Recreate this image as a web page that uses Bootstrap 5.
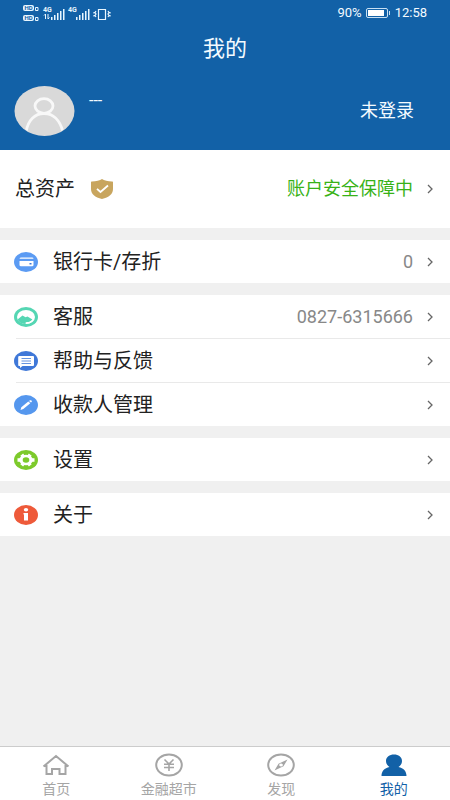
<!DOCTYPE html>
<html lang="zh-CN">
<head>
<meta charset="utf-8">
<meta name="viewport" content="width=device-width, initial-scale=1">
<title>我的</title>
<link href="https://cdn.jsdelivr.net/npm/bootstrap@5.3.0/dist/css/bootstrap.min.css" rel="stylesheet">
<style>
body{font-family:Roboto,"Noto Sans CJK SC",sans-serif;background:#f0f0f0;color:#222}
.top-area{background:#1261a7;color:#f4fbff}
.status-bar{height:26px;padding:0 23px;font-size:13px;line-height:26px}
.page-title{font-size:22px;line-height:30px;height:46px;padding-top:8px;font-weight:400}
.profile-row{height:78px;padding:0 36px 0 14px}
.user-name{font-size:16px;line-height:20px;margin-bottom:20px;margin-left:14px}
.t18{font-size:18px;line-height:24px}
.menu-stack{gap:12px}
.menu-item{height:43px;padding:0 16px 0 14px;color:#222;background:#fff}
.menu-item:hover{background:#fafafa}
.menu-text{font-size:20px;line-height:28px;margin-left:15px}
.asset-item{height:78px}
.asset-item .menu-text{margin-left:1px;margin-right:15px}
.safe{color:#38b217}
.value-text{color:#888}
.arrow{margin-left:13px}
.rule{height:1px;margin-left:16px;background:#e9e9e9}
.tab-bar{height:54px;border-top:1px solid #ccc;background:#fff}
.tab-link{color:#a5a5a5;font-size:14px;line-height:18px;padding-top:6px;gap:3px}
.tab-link.active{color:#1261a7}
</style>
<script src="https://cdn.jsdelivr.net/npm/bootstrap@5.3.0/dist/js/bootstrap.bundle.min.js" defer></script>
</head>
<body>
<svg class="d-none"><symbol id="chev" viewBox="0 0 8 12"><path d="M2 2l4 4-4 4" fill="none" stroke="#666" stroke-width="1.3"/></symbol></svg>
<div class="d-flex flex-column min-vh-100">
<header class="top-area">
  <div class="status-bar d-flex align-items-center justify-content-between">
    <svg width="90" height="20" viewBox="0 0 90 20" fill="#e8f6ff" font-family="Roboto,sans-serif" font-weight="700">
      <rect x="0" y="2" width="11" height="6" rx="2"/><rect x="0" y="12" width="11" height="6" rx="2"/>
      <g fill="#1261a7" font-size="6"><text x="1.5" y="7.2">HD</text><text x="1.5" y="17.2">HD</text></g>
      <path d="M12.500 4.500h2.500v3h-2.500zM12.500 14.500h2.500v3h-2.500z" fill="none" stroke="#e8f6ff"/>
      <text x="20" y="9" font-size="7">4G</text><text x="45" y="9" font-size="7">4G</text>
      <path d="M22.500 16v-5l-1.500 1.500M25 11v5l1.500-1.500" stroke="#e8f6ff" fill="none"/>
      <path d="M28 14h1.500v3H28zM31 12h1.500v5H31zM34 10h1.500v7H34zM37 8h1.500v9H37zM40 6h1.500v11H40zM53 14h1.500v3H53zM56 12h1.500v5H56zM59 10h1.500v7H59zM62 8h1.500v9H62zM65 6h1.500v11H65z"/>
      <path d="M75.500 6.500h7v10h-7zM73 8l-1 1.500 1 1.500-1 1.500 1 1.500M71 9v1.500M71 12v1.500M85 8l1 1.500-1 1.500 1 1.500-1 1.500M87 9v1.500M87 12v1.500" fill="none" stroke="#e8f6ff" stroke-width="1.200"/>
    </svg>
    <div class="d-flex align-items-center">
      <span>90%</span>
      <svg class="ms-1 me-1" width="25" height="10" viewBox="0 0 25 10"><rect x=".5" y=".5" width="21" height="9" rx="1.500" fill="none" stroke="#c8e0f3"/><rect x="2" y="2" width="16" height="6" fill="#fff"/><path d="M23.500 3v4" stroke="#c8e0f3"/></svg>
      <span>12:58</span>
    </div>
  </div>
  <h1 class="page-title text-center m-0">我的</h1>
  <div class="profile-row d-flex align-items-center">
    <svg width="61" height="50" viewBox="0 0 61 50"><defs><clipPath id="face"><ellipse cx="30.500" cy="25" rx="29.500" ry="24.500"/></clipPath></defs><ellipse cx="30.500" cy="25" rx="30" ry="25" fill="#d9d9d9"/><g clip-path="url(#face)" fill="none" stroke="#f8f8f8" stroke-width="2.800"><ellipse cx="30" cy="20" rx="9" ry="7.300"/><path d="M12 46c2-12 9-18.500 18-18.500S46 34 49 46"/></g></svg>
    <span class="user-name">---</span>
    <span class="t18 ms-auto">未登录</span>
  </div>
</header>
<main class="menu-stack d-flex flex-column">
  <a href="#" class="menu-item asset-item d-flex align-items-center text-decoration-none">
    <span class="menu-text">总资产</span>
    <svg width="24" height="22" viewBox="0 0 24 22"><path d="M12 1c2 1.500 6 2.300 10 2.500.8 0 1 .4 1 1V11c0 5-4 8.500-11 10C5 19.500 1 16 1 11V4.500c0-.6.2-1 1-1C6 3.300 10 2.500 12 1z" fill="#c8a55e"/><path d="M7 10.800l3.500 3.200L18 7.500" fill="none" stroke="#fff" stroke-width="1.800"/></svg>
    <span class="t18 safe ms-auto">账户安全保障中</span><svg class="arrow" width="8" height="12"><use href="#chev"/></svg>
  </a>
  <a href="#" class="menu-item d-flex align-items-center text-decoration-none">
    <svg width="24" height="20" viewBox="0 0 24 20"><ellipse cx="12" cy="10" rx="12" ry="10" fill="#5b9bf3"/><path d="M7.500 5.500H18q1.500 0 1.500 1.200h-14q0-1.200 2-1.200zM5.500 9h14v4q0 1.300-1.500 1.300H7q-1.500 0-1.500-1.300z" fill="#fff"/><rect x="15.500" y="11" width="2" height="1.500" fill="#3f78d8"/></svg>
    <span class="menu-text">银行卡/存折</span><span class="t18 value-text ms-auto">0</span><svg class="arrow" width="8" height="12"><use href="#chev"/></svg>
  </a>
  <div class="bg-white">
    <a href="#" class="menu-item d-flex align-items-center text-decoration-none">
      <svg width="24" height="20" viewBox="0 0 24 20"><ellipse cx="12" cy="10" rx="12" ry="10" fill="#55d6b3"/><ellipse cx="12" cy="10" rx="9" ry="7" fill="#fff"/><path d="M3.500 12.500L8.500 8.500l3 1.800 2-.8 5 3c-1.500 2-3.500 2.500-5.500 2.500-1 0-1.500 1-1 2C8 17 5 15.500 3.500 12.500z" fill="#55d6b3"/><path d="M11.500 16c3.500.5 6-1 7.500-3.500" stroke="#fff" stroke-width="1.200" fill="none"/></svg>
      <span class="menu-text">客服</span><span class="t18 value-text ms-auto">0827-6315666</span><svg class="arrow" width="8" height="12"><use href="#chev"/></svg>
    </a>
    <div class="rule"></div>
    <a href="#" class="menu-item d-flex align-items-center text-decoration-none">
      <svg width="24" height="20" viewBox="0 0 24 20"><ellipse cx="12" cy="10" rx="12" ry="10" fill="#3f78d8"/><path d="M5.500 5H19q1 0 1 1v8q0 1-1 1H8.500L6 17v-2H5q-.8 0-.8-1V6q0-1 1.300-1z" fill="#fff"/><path d="M7.500 7.500h9.500M7.500 10h9.500M7.500 12.500h9.500" stroke="#3f78d8" stroke-width=".8"/></svg>
      <span class="menu-text">帮助与反馈</span><svg class="arrow ms-auto" width="8" height="12"><use href="#chev"/></svg>
    </a>
    <div class="rule"></div>
    <a href="#" class="menu-item d-flex align-items-center text-decoration-none">
      <svg width="24" height="20" viewBox="0 0 24 20"><ellipse cx="12" cy="10" rx="12" ry="10" fill="#5597ee"/><path d="M6.500 15l.8-2.800 7-5.700 2 1.800-7 5.600zM15 6l1-.7q.8-.4 1.500.3t.2 1.300l-.8.7z" fill="#fff"/></svg>
      <span class="menu-text">收款人管理</span><svg class="arrow ms-auto" width="8" height="12"><use href="#chev"/></svg>
    </a>
  </div>
  <a href="#" class="menu-item d-flex align-items-center text-decoration-none">
    <svg width="24" height="20" viewBox="0 0 24 20"><ellipse cx="12" cy="10" rx="12" ry="10" fill="#7dca2b"/><ellipse cx="12" cy="10" rx="6.800" ry="5.300" fill="#fff"/><path d="M3.500 10h17M7.700 4.700l8.600 10.600M16.300 4.700L7.700 15.300" stroke="#fff" stroke-width="3.600"/><ellipse cx="12" cy="10" rx="3.300" ry="2.700" fill="#7dca2b"/></svg>
    <span class="menu-text">设置</span><svg class="arrow ms-auto" width="8" height="12"><use href="#chev"/></svg>
  </a>
  <a href="#" class="menu-item d-flex align-items-center text-decoration-none">
    <svg width="24" height="20" viewBox="0 0 24 20"><ellipse cx="12" cy="10" rx="12" ry="10" fill="#ee5a3a"/><ellipse cx="12" cy="4.800" rx="2.200" ry="1.800" fill="#fff"/><path d="M9.500 8H14v7.500h-4V9.500h-.5z" fill="#fff"/></svg>
    <span class="menu-text">关于</span><svg class="arrow ms-auto" width="8" height="12"><use href="#chev"/></svg>
  </a>
</main>
<nav class="tab-bar d-flex mt-auto">
  <a href="#" class="tab-link d-flex flex-column align-items-center text-decoration-none flex-fill w-25">
    <svg width="28" height="24" viewBox="0 0 28 24" fill="none" stroke="currentColor" stroke-width="2"><path d="M1.500 13.500L14 3l12.500 10.500M4.500 12v9H10v-5h7.500v5h6v-9"/></svg><span>首页</span></a>
  <a href="#" class="tab-link d-flex flex-column align-items-center text-decoration-none flex-fill w-25">
    <svg width="28" height="24" viewBox="0 0 28 24" fill="none" stroke="currentColor" stroke-width="2"><ellipse cx="14" cy="12" rx="12.800" ry="10.500"/><path d="M9.500 6.500L14 11l4.500-4.500M14 11v7M9 11.200h10M9 14.500h10" stroke-width="1.600"/></svg><span>金融超市</span></a>
  <a href="#" class="tab-link d-flex flex-column align-items-center text-decoration-none flex-fill w-25">
    <svg width="28" height="24" viewBox="0 0 28 24" fill="none" stroke="currentColor" stroke-width="2"><ellipse cx="14" cy="12" rx="12.800" ry="10.500"/><path fill-rule="evenodd" d="M20.500 6.500l-4 6.800L7.500 17.500l4-6.800zM14 10.500a1.800 1.500 0 1 0 .1 0z" fill="currentColor" stroke="none"/></svg><span>发现</span></a>
  <a href="#" class="tab-link active d-flex flex-column align-items-center text-decoration-none flex-fill w-25" aria-current="page">
    <svg width="28" height="24" viewBox="0 0 28 24" fill="currentColor"><path d="M14 1.500c4.500 0 8 2.600 8 6.500 0 2.600-1.300 4.500-3.500 6 5 1 8 4 8 9h-25c0-5 3-8 8-9C7.300 12.500 6 10.600 6 8c0-3.900 3.500-6.500 8-6.500z"/></svg><span>我的</span></a>
</nav>
</div>
</body>
</html>
